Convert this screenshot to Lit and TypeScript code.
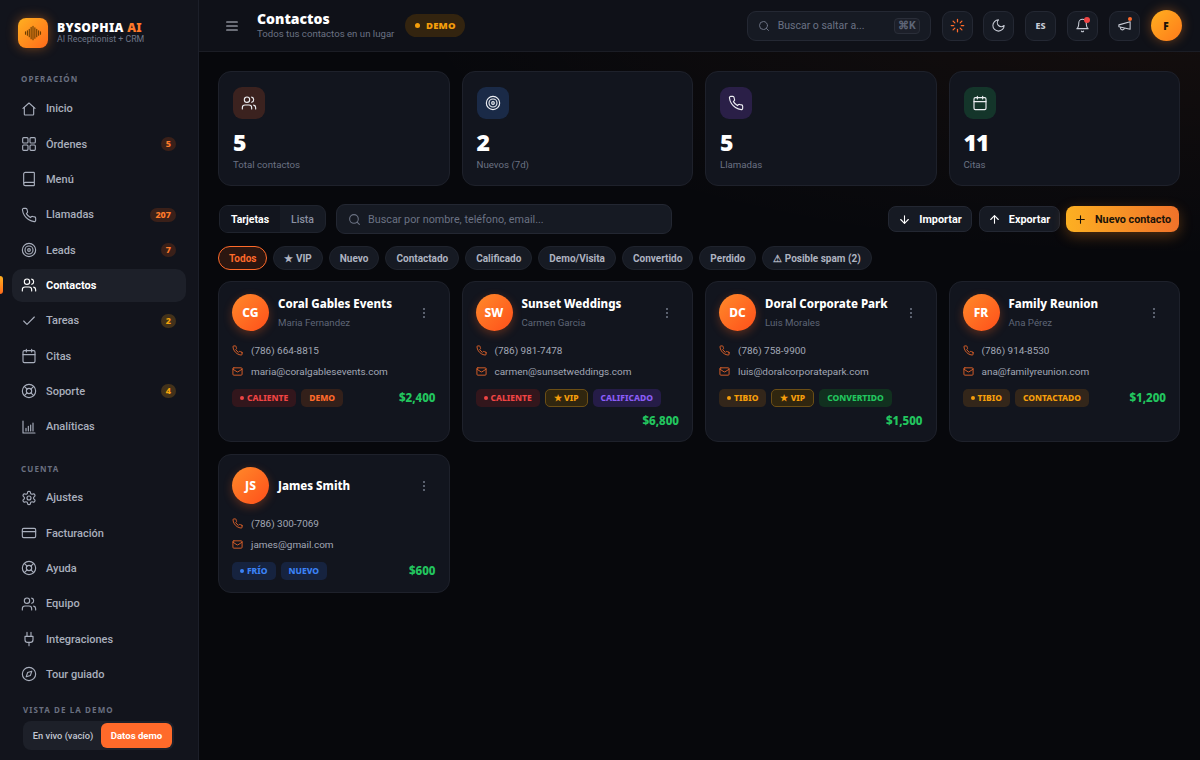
import { LitElement, html, css, svg } from "lit";
import { customElement } from "lit/decorators.js";

const P: Record<string, any> = {
  home: svg`<path d="M3 11 12 3l9 8"/><path d="M5 9.5V20a1 1 0 0 0 1 1h12a1 1 0 0 0 1-1V9.5"/>`,
  grid: svg`<rect x="2.5" y="2.5" width="8" height="8" rx="1.5"/><rect x="13.5" y="2.5" width="8" height="8" rx="1.5"/><rect x="2.5" y="13.5" width="8" height="8" rx="1.5"/><rect x="13.5" y="13.5" width="8" height="8" rx="1.5"/>`,
  book: svg`<path d="M4 19.5v-15A2.5 2.5 0 0 1 6.5 2H19a1 1 0 0 1 1 1v18a1 1 0 0 1-1 1H6.5a2.5 2.5 0 0 1 0-5H20"/>`,
  phone: svg`<path d="M22 16.92v3a2 2 0 0 1-2.18 2 19.79 19.79 0 0 1-8.63-3.07 19.5 19.5 0 0 1-6-6 19.79 19.79 0 0 1-3.07-8.67A2 2 0 0 1 4.11 2h3a2 2 0 0 1 2 1.72 12.84 12.84 0 0 0 .7 2.81 2 2 0 0 1-.45 2.11L8.09 9.91a16 16 0 0 0 6 6l1.27-1.27a2 2 0 0 1 2.11-.45 12.84 12.84 0 0 0 2.81.7A2 2 0 0 1 22 16.92z"/>`,
  target: svg`<circle cx="12" cy="12" r="10"/><circle cx="12" cy="12" r="6"/><circle cx="12" cy="12" r="2"/>`,
  users: svg`<path d="M16 21v-2a4 4 0 0 0-4-4H6a4 4 0 0 0-4 4v2"/><circle cx="9" cy="7" r="4"/><path d="M22 21v-2a4 4 0 0 0-3-3.87"/><path d="M16 3.13a4 4 0 0 1 0 7.75"/>`,
  check: svg`<path d="M20 6 9 17l-5-5"/>`,
  calendar: svg`<rect x="3" y="4" width="18" height="18" rx="2"/><path d="M16 2v4M8 2v4M3 10h18"/>`,
  buoy: svg`<circle cx="12" cy="12" r="10"/><circle cx="12" cy="12" r="4"/><path d="m4.93 4.93 4.24 4.24M14.83 9.17l4.24-4.24M14.83 14.83l4.24 4.24M9.17 14.83l-4.24 4.24"/>`,
  chart: svg`<path d="M3 3v18h18"/><path d="M7.5 18v-4M11 18V11M14.5 18V9M18 18V6"/>`,
  gear: svg`<path d="M12.22 2h-.44a2 2 0 0 0-2 2v.18a2 2 0 0 1-1 1.73l-.43.25a2 2 0 0 1-2 0l-.15-.08a2 2 0 0 0-2.73.73l-.22.38a2 2 0 0 0 .73 2.73l.15.1a2 2 0 0 1 1 1.72v.51a2 2 0 0 1-1 1.74l-.15.09a2 2 0 0 0-.73 2.73l.22.38a2 2 0 0 0 2.73.73l.15-.08a2 2 0 0 1 2 0l.43.25a2 2 0 0 1 1 1.73V20a2 2 0 0 0 2 2h.44a2 2 0 0 0 2-2v-.18a2 2 0 0 1 1-1.73l.43-.25a2 2 0 0 1 2 0l.15.08a2 2 0 0 0 2.73-.73l.22-.39a2 2 0 0 0-.73-2.73l-.15-.08a2 2 0 0 1-1-1.74v-.5a2 2 0 0 1 1-1.74l.15-.09a2 2 0 0 0 .73-2.73l-.22-.38a2 2 0 0 0-2.73-.73l-.15.08a2 2 0 0 1-2 0l-.43-.25a2 2 0 0 1-1-1.73V4a2 2 0 0 0-2-2z"/><circle cx="12" cy="12" r="3"/>`,
  card: svg`<rect x="2" y="5" width="20" height="14" rx="2"/><path d="M2 10h20"/>`,
  plug: svg`<path d="M12 22v-5M9 8V2M15 8V2"/><path d="M18 8v5a4 4 0 0 1-4 4h-4a4 4 0 0 1-4-4V8Z"/>`,
  compass: svg`<circle cx="12" cy="12" r="10"/><polygon points="16.24 7.76 14.12 14.12 7.76 16.24 9.88 9.88"/>`,
  menu: svg`<path d="M4 6h16M4 12h16M4 18h16"/>`,
  search: svg`<circle cx="11" cy="11" r="8"/><path d="m21 21-4.3-4.3"/>`,
  loader: svg`<path d="M12 2v4M12 18v4M4.93 4.93l2.83 2.83M16.24 16.24l2.83 2.83M2 12h4M18 12h4M4.93 19.07l2.83-2.83M16.24 7.76l2.83-2.83"/>`,
  moon: svg`<path d="M12 3a6 6 0 0 0 9 9 9 9 0 1 1-9-9Z"/>`,
  bell: svg`<path d="M6 8a6 6 0 0 1 12 0c0 7 3 9 3 9H3s3-2 3-9"/><path d="M10.3 21a1.94 1.94 0 0 0 3.4 0"/>`,
  mega: svg`<path d="m3 11 18-5v12L3 14v-3z"/><path d="M11.6 16.8a3 3 0 1 1-5.8-1.6"/>`,
  mail: svg`<rect x="2" y="4" width="20" height="16" rx="2"/><path d="m22 7-8.97 5.7a1.94 1.94 0 0 1-2.06 0L2 7"/>`,
  down: svg`<path d="M12 5v14"/><path d="m19 12-7 7-7-7"/>`,
  up: svg`<path d="m5 12 7-7 7 7"/><path d="M12 19V5"/>`,
  plus: svg`<path d="M5 12h14M12 5v14"/>`,
  wave: svg`<path d="M2 10.5v3M4.5 9v6M7 7v10M9.5 4.5v15M12 3v18M14.5 5v14M17 7v10M19.5 9v6M22 10.5v3"/>`,
};

const icon = (n: string, cls = "") =>
  html`<svg class="ic ${cls}" viewBox="0 0 24 24" fill="none" stroke="currentColor" stroke-linecap="round" stroke-linejoin="round">${P[n]}</svg>`;

const navA = [
  { i: "home", t: "Inicio" },
  { i: "grid", t: "Órdenes", b: "5", c: "o" },
  { i: "book", t: "Menú" },
  { i: "phone", t: "Llamadas", b: "207", c: "o" },
  { i: "target", t: "Leads", b: "7", c: "o" },
  { i: "users", t: "Contactos", active: true },
  { i: "check", t: "Tareas", b: "2", c: "y" },
  { i: "calendar", t: "Citas" },
  { i: "buoy", t: "Soporte", b: "4", c: "y" },
  { i: "chart", t: "Analíticas" },
];
const navB = [
  { i: "gear", t: "Ajustes" },
  { i: "card", t: "Facturación" },
  { i: "buoy", t: "Ayuda" },
  { i: "users", t: "Equipo" },
  { i: "plug", t: "Integraciones" },
  { i: "compass", t: "Tour guiado" },
];
const stats = [
  { i: "users", v: "5", l: "Total contactos", c: "s1" },
  { i: "target", v: "2", l: "Nuevos (7d)", c: "s2" },
  { i: "phone", v: "5", l: "Llamadas", c: "s3" },
  { i: "calendar", v: "11", l: "Citas", c: "s4" },
];
const filters = ["Todos", "★ VIP", "Nuevo", "Contactado", "Calificado", "Demo/Visita", "Convertido", "Perdido", "⚠ Posible spam (2)"];
const contacts = [
  { a: "CG", n: "Coral Gables Events", p: "Maria Fernandez", ph: "(786) 664-8815", e: "maria@coralgablesevents.com", v: "$2,400",
    tags: [{ t: "CALIENTE", c: "red", d: true }, { t: "DEMO", c: "org" }] },
  { a: "SW", n: "Sunset Weddings", p: "Carmen Garcia", ph: "(786) 981-7478", e: "carmen@sunsetweddings.com", v: "$6,800",
    tags: [{ t: "CALIENTE", c: "red", d: true }, { t: "★ VIP", c: "vip" }, { t: "CALIFICADO", c: "pur" }] },
  { a: "DC", n: "Doral Corporate Park", p: "Luis Morales", ph: "(786) 758-9900", e: "luis@doralcorporatepark.com", v: "$1,500",
    tags: [{ t: "TIBIO", c: "amb", d: true }, { t: "★ VIP", c: "vip" }, { t: "CONVERTIDO", c: "grn" }] },
  { a: "FR", n: "Family Reunion", p: "Ana Pérez", ph: "(786) 914-8530", e: "ana@familyreunion.com", v: "$1,200",
    tags: [{ t: "TIBIO", c: "amb", d: true }, { t: "CONTACTADO", c: "amb" }] },
  { a: "JS", n: "James Smith", p: "", ph: "(786) 300-7069", e: "james@gmail.com", v: "$600",
    tags: [{ t: "FRÍO", c: "blu", d: true }, { t: "NUEVO", c: "blu" }] },
];

@customElement("app-root")
export class AppRoot extends LitElement {
  static styles = css`
    :host { display: block; width: 1200px; height: 760px; overflow: hidden; font-family: "Noto Sans", sans-serif; color: #fff; background: #07080c; }
    * { box-sizing: border-box; }
    .ic { display: block; width: 16px; height: 16px; stroke-width: 2; flex: none; }
    .app { display: flex; height: 760px; }

    .side { width: 199px; flex: none; background: #12141c; border-right: 1px solid #1c1f29; display: flex; flex-direction: column; padding: 18px 12px 0; position: relative; }
    .brand { display: flex; align-items: center; gap: 9px; padding-left: 6px; height: 30px; }
    .logo { width: 30px; height: 30px; border-radius: 8px; background: linear-gradient(135deg, #ffb020, #ff6a1a); box-shadow: 0 0 12px rgba(255,130,30,.45); display: flex; align-items: center; justify-content: center; color: #6b3d00; }
    .logo .ic { width: 18px; height: 18px; stroke-width: 1.5; }
    .bname { font-size: 12.2px; font-weight: 900; line-height: 12px; letter-spacing: .3px; white-space: nowrap; }
    .bname span { color: #ff7a2a; }
    .bsub { font-family: Roboto, sans-serif; font-size: 8.8px; line-height: 9px; color: #6f7687; white-space: nowrap; margin-top: 1px; }
    .sec { font-size: 8px; font-weight: 700; letter-spacing: 1.1px; color: #6a7080; padding-left: 9px; line-height: 12px; }
    .sec.a { margin-top: 25px; margin-bottom: 7.3px; }
    .sec.b { margin-top: 20px; margin-bottom: 6px; }
    .nav { display: flex; flex-direction: column; gap: 2.33px; }
    .item { height: 33px; display: flex; align-items: center; gap: 9px; padding: 0 10px 0 9px; font-family: Roboto, sans-serif; font-size: 11px; font-weight: 500; color: #a9afbd; border-radius: 10px; }
    .item .ic { width: 16px; height: 16px; stroke-width: 1.7; color: #a9afbd; }
    .item.on { background: #1d2029; color: #fff; font-weight: 700; }
    .item.on .ic { color: #fff; }
    .item .lbl { flex: 1; }
    .cnt { font-family: "Noto Sans", sans-serif; font-size: 9px; font-weight: 800; line-height: 14px; height: 14px; padding: 0 5px; border-radius: 7px; }
    .cnt.o { background: #3a2019; color: #ff7a2a; }
    .cnt.y { background: #43321a; color: #f5a30b; }
    .mark { position: absolute; left: 0; top: 276px; width: 3px; height: 18px; background: linear-gradient(#ffb020, #ff6a1a); border-radius: 0 3px 3px 0; }
    .vd { font-size: 8px; font-weight: 700; letter-spacing: 1.1px; color: #6a7080; padding-left: 11px; line-height: 12px; margin-top: 13.5px; }
    .tog { margin: 5px 0 0 11px; width: 151px; height: 29px; border-radius: 8px; background: #1d2029; display: flex; align-items: center; padding: 2px; font-family: Roboto, sans-serif; font-size: 9.3px; font-weight: 500; color: #c2c7d2; }
    .tog .l { width: 76px; text-align: center; white-space: nowrap; }
    .tog .r { flex: 1; height: 25px; line-height: 25px; text-align: center; border-radius: 6px; background: #ff6a2a; color: #fff; font-weight: 700; font-size: 9.6px; }

    .main { flex: 1; min-width: 0; display: flex; flex-direction: column; background: radial-gradient(800px 260px at 100% 0, rgba(255,120,40,.06), transparent), #07080c; }
    .top { height: 52px; flex: none; background: #0f1118; border-bottom: 1px solid #1b1d25; display: flex; align-items: center; padding: 0 18.5px 0 25px; }
    .top .menu { width: 16px; height: 16px; color: #c8ccd6; stroke-width: 1.7; }
    .ttl { margin-left: 17px; }
    .ttl h1 { margin: 0; font-size: 14px; font-weight: 900; line-height: 15px; }
    .ttl p { margin: 0; font-family: Roboto, sans-serif; font-size: 9.65px; line-height: 13px; color: #6b7283; margin-top: 1px; }
    .demo { margin-left: 11px; height: 23px; width: 60px; border-radius: 12px; background: #33240f; color: #f59e0b; font-size: 9.5px; font-weight: 900; display: flex; align-items: center; justify-content: center; gap: 6px; letter-spacing: .2px; }
    .demo i { width: 5px; height: 5px; border-radius: 50%; background: #f59e0b; }
    .sp { flex: 1; }
    .qs { width: 184px; height: 30px; border-radius: 9px; border: 1px solid #242833; background: #161a23; display: flex; align-items: center; padding: 0 10px; gap: 8px; color: #6b7283; font-family: Roboto, sans-serif; font-size: 10.5px; margin-right: 10.8px; white-space: nowrap; }
    .qs .ic { width: 12px; height: 12px; }
    .qs .q { flex: 1; }
    .kbd { font-size: 10.5px; padding: 1px 3px; line-height: 12px; border: 1px solid #2a2e39; border-radius: 4px; background: #1c1f29; color: #5f6677; font-weight: 700; }
    .tb { width: 31px; height: 30px; border-radius: 9px; border: 1px solid #242833; background: #161a23; display: flex; align-items: center; justify-content: center; margin-right: 10.8px; position: relative; color: #c8ccd6; font-size: 9px; font-weight: 800; }
    .tb .ic { width: 15px; height: 15px; stroke-width: 1.7; }
    .tb .spin { color: #ff6a2a; stroke-width: 2; }
    .pip { position: absolute; top: 5px; right: 7px; width: 6px; height: 6px; border-radius: 50%; background: #ef4444; }
    .pip.o { width: 4px; height: 4px; background: #ff6a2a; top: 5px; right: 7px; }
    .ava { width: 31px; height: 31px; border-radius: 50%; background: linear-gradient(135deg, #ffb020, #ff7a1a); box-shadow: 0 0 12px rgba(255,130,30,.4); color: #1a1208; font-size: 10px; font-weight: 900; display: flex; align-items: center; justify-content: center; }

    .body { padding: 19px 20px 0 19px; display: flex; flex-direction: column; }
    .grid { display: grid; grid-template-columns: repeat(4, 1fr); gap: 12px; }
    .stat { height: 115px; border-radius: 13px; background: #12151e; border: 1px solid #1e212b; padding: 15px 14px; }
    .sic { width: 32px; height: 32px; border-radius: 9px; display: flex; align-items: center; justify-content: center; color: #eceef2; }
    .sic .ic { width: 16px; height: 16px; stroke-width: 1.7; }
    .s1 { background: #3b221f; } .s2 { background: #1a2a47; } .s3 { background: #2a1f47; } .s4 { background: #14352a; }
    .val { font-size: 23px; line-height: 24px; font-weight: 900; margin-top: 11px; letter-spacing: -1px; }
    .sl { font-family: Roboto, sans-serif; font-size: 9.7px; line-height: 14px; color: #6b7283; margin-top: 4px; }

    .bar { display: flex; align-items: center; margin-top: 18px; height: 30px; }
    .seg { width: 107px; height: 28px; margin-left: 1px; display: flex; border-radius: 9px; background: #161a23; border: 1px solid #1f232d; font-family: Roboto, sans-serif; font-size: 10.5px; font-weight: 700; align-items: center; overflow: hidden; }
    .seg b { width: 60px; height: 100%; background: #12151e; display: flex; align-items: center; justify-content: center; font-weight: 700; }
    .seg span { flex: 1; text-align: center; color: #8a90a0; font-weight: 500; }
    .fs { width: 336px; height: 30px; margin-left: 10px; border-radius: 9px; background: #161a23; border: 1px solid #232732; display: flex; align-items: center; gap: 7px; padding: 0 11px; color: #6b7283; font-family: Roboto, sans-serif; font-size: 10.8px; }
    .fs .ic { width: 13px; height: 13px; }
    .btn { height: 26px; border-radius: 8px; background: #161a23; border: 1px solid #232732; display: flex; align-items: center; justify-content: center; gap: 8px; font-family: Roboto, sans-serif; font-size: 10.8px; font-weight: 700; margin-left: 6.5px; }
    .btn .ic { width: 13px; height: 13px; }
    .btn.w1 { width: 84px; } .btn.w2 { width: 81px; }
    .btn.pri { width: 113px; margin-right: 1px; background: linear-gradient(90deg, #fdb022, #f0722a); border: 0; color: #1a1208; box-shadow: 0 4px 14px rgba(255,140,30,.3); }

    .chips { display: flex; gap: 6px; margin-top: 12px; height: 24px; }
    .chip { height: 24px; padding: 0 10px; border-radius: 12px; background: #161a23; border: 1px solid #1f232d; color: #aeb3c0; font-family: Roboto, sans-serif; font-size: 10px; font-weight: 700; display: flex; align-items: center; white-space: nowrap; }
    .chip.on { background: #2b1610; border-color: #ff6a2a; color: #ff6a2a; }

    .cards { margin-top: 11px; }
    .c { border-radius: 13px; background: #12151e; border: 1px solid #1e212b; padding: 12px 13px 0; }
    .c.h160 { height: 161px; }
    .c.h138 { height: 139px; }
    .ch { display: flex; align-items: flex-start; }
    .av { width: 37px; height: 37px; border-radius: 50%; background: linear-gradient(135deg, #ff8a2a, #ff4f1a); box-shadow: 0 3px 10px rgba(255,100,30,.3); font-size: 12px; font-weight: 800; display: flex; align-items: center; justify-content: center; flex: none; }
    .who { flex: 1; margin-left: 9px; min-width: 0; }
    .who.solo { align-self: center; }
    .nm { font-size: 11.5px; font-weight: 800; line-height: 15px; white-space: nowrap; margin-top: 2px; }
    .pr { font-family: Roboto, sans-serif; font-size: 9.7px; line-height: 13px; color: #5f6677; margin-top: 5px; }
    .who.solo .nm { margin-top: 0; }
    .dots { width: 12px; height: 37px; display: flex; flex-direction: column; align-items: center; justify-content: center; gap: 2px; margin-right: 6px; }
    .dots i { width: 2px; height: 2px; border-radius: 50%; background: #737a8a; }
    .ln { display: flex; align-items: center; gap: 8px; font-family: Roboto, sans-serif; font-size: 9.95px; line-height: 14px; color: #a2a8b6; margin-top: 7px; }
    .ln.first { margin-top: 12.5px; }
    .ln .ic { width: 11px; height: 11px; color: #e0622a; stroke-width: 2; }
    .tg { display: flex; flex-wrap: wrap; align-items: center; gap: 6px 5px; margin-top: 10px; }
    .t { height: 18px; padding: 0 8px; border-radius: 5px; font-size: 8.5px; font-weight: 800; display: flex; align-items: center; gap: 3px; white-space: nowrap; }
    .t i { width: 4px; height: 4px; border-radius: 50%; background: currentColor; }
    .red { background: #32161c; color: #ef4444; }
    .org { background: #33201a; color: #ff6a2a; }
    .amb { background: #33261a; color: #f59e0b; }
    .vip { background: #30260f; color: #f59e0b; border: 1px solid #6b4e15; }
    .pur { background: #251c47; color: #8b5cf6; }
    .grn { background: #11301f; color: #22c55e; }
    .blu { background: #16233f; color: #3b82f6; }
    .amt { margin-left: auto; font-size: 11.5px; font-weight: 800; color: #22c55e; }
  `;

  private nav(list: any[]) {
    return html`<div class="nav">${list.map(
      (n) => html`<div class="item ${n.active ? "on" : ""}">${icon(n.i)}<span class="lbl">${n.t}</span>${n.b ? html`<span class="cnt ${n.c}">${n.b}</span>` : ""}</div>`
    )}</div>`;
  }

  render() {
    return html`<div class="app">
      <aside class="side">
        <div class="mark"></div>
        <div class="brand">
          <div class="logo">${icon("wave")}</div>
          <div><div class="bname">BYSOPHIA <span>AI</span></div><div class="bsub">AI Receptionist + CRM</div></div>
        </div>
        <div class="sec a">OPERACIÓN</div>
        ${this.nav(navA)}
        <div class="sec b">CUENTA</div>
        ${this.nav(navB)}
        <div class="vd">VISTA DE LA DEMO</div>
        <div class="tog"><span class="l">En vivo (vacío)</span><span class="r">Datos demo</span></div>
      </aside>
      <div class="main">
        <header class="top">
          ${icon("menu", "menu")}
          <div class="ttl"><h1>Contactos</h1><p>Todos tus contactos en un lugar</p></div>
          <div class="demo"><i></i>DEMO</div>
          <div class="sp"></div>
          <div class="qs">${icon("search")}<span class="q">Buscar o saltar a...</span><span class="kbd">⌘K</span></div>
          <div class="tb">${icon("loader", "spin")}</div>
          <div class="tb">${icon("moon")}</div>
          <div class="tb">ES</div>
          <div class="tb">${icon("bell")}<i class="pip"></i></div>
          <div class="tb">${icon("mega")}<i class="pip o"></i></div>
          <div class="ava">F</div>
        </header>
        <div class="body">
          <div class="grid">${stats.map(
            (s) => html`<div class="stat"><div class="sic ${s.c}">${icon(s.i)}</div><div class="val">${s.v}</div><div class="sl">${s.l}</div></div>`
          )}</div>
          <div class="bar">
            <div class="seg"><b>Tarjetas</b><span>Lista</span></div>
            <div class="fs">${icon("search")}Buscar por nombre, teléfono, email...</div>
            <div class="sp"></div>
            <div class="btn w1">${icon("down")}Importar</div>
            <div class="btn w2">${icon("up")}Exportar</div>
            <div class="btn pri">${icon("plus")}Nuevo contacto</div>
          </div>
          <div class="chips">${filters.map((f, i) => html`<div class="chip ${i === 0 ? "on" : ""}">${f}</div>`)}</div>
          <div class="grid cards">${contacts.map(
            (c) => html`<div class="c ${c.p ? "h160" : "h138"}">
              <div class="ch">
                <div class="av">${c.a}</div>
                <div class="who ${c.p ? "" : "solo"}"><div class="nm">${c.n}</div>${c.p ? html`<div class="pr">${c.p}</div>` : ""}</div>
                <div class="dots"><i></i><i></i><i></i></div>
              </div>
              <div class="ln first">${icon("phone")}${c.ph}</div>
              <div class="ln">${icon("mail")}${c.e}</div>
              <div class="tg">${c.tags.map((t: any) => html`<span class="t ${t.c}">${t.d ? html`<i></i>` : ""}${t.t}</span>`)}<span class="amt">${c.v}</span></div>
            </div>`
          )}</div>
        </div>
      </div>
    </div>`;
  }
}
